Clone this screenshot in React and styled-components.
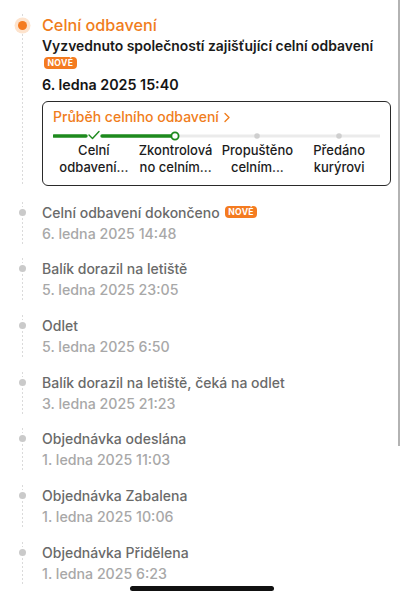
import React from "react";
import styled, { createGlobalStyle } from "styled-components";

const Global = createGlobalStyle`
  html, body { margin: 0; padding: 0; background: #ffffff; }
  body { font-family: Inter, "Noto Sans", "Liberation Sans", sans-serif; -webkit-font-smoothing: antialiased; }
  #root { width: 404px; height: 600px; overflow: hidden; }
`;

const Screen = styled.div`
  position: relative;
  width: 404px;
  height: 600px;
  overflow: hidden;
  background: #fff;
`;

const Timeline = styled.div`
  display: flex;
  flex-direction: column;
  padding-top: 14px;
`;

const Item = styled.div`
  display: grid;
  grid-template-columns: 42px 1fr;
  padding-bottom: ${(p) => p.$gap}px;
`;

const Rail = styled.div`
  box-sizing: border-box;
  width: 42px;
  display: flex;
  justify-content: center;
  padding-left: 2px;
  padding-top: ${(p) => p.$dotTop}px;
  background-image: linear-gradient(#dadada 50%, transparent 50%);
  background-size: 1px 4px;
  background-repeat: repeat-y;
  background-position: 22px 0;
`;

const Dot = styled.span`
  display: block;
  width: ${(p) => (p.$active ? 9 : 7)}px;
  height: ${(p) => (p.$active ? 9 : 7)}px;
  border-radius: 50%;
  background: ${(p) => (p.$active ? "#f47b20" : "#cacaca")};
  box-shadow: ${(p) => (p.$active ? "0 0 0 3.5px #fde3cd" : "0 0 0 2px #fff")};
`;

const Content = styled.div`
  display: flex;
  flex-direction: column;
  min-width: 0;
`;

const ActiveTitle = styled.div`
  font-size: 16.2px;
  line-height: 22px;
  font-weight: 500;
  color: #f07d1c;
`;

const Subtitle = styled.div`
  font-size: 13.9px;
  line-height: 20px;
  font-weight: 600;
  color: #1a1a1a;
`;

const Badge = styled.span`
  display: inline-flex;
  align-items: center;
  justify-content: center;
  align-self: ${(p) => (p.$inline ? "center" : "flex-start")};
  height: 12px;
  padding: 0 3.5px;
  margin-top: ${(p) => (p.$inline ? 0 : 1)}px;
  margin-left: ${(p) => (p.$inline ? 5 : 2)}px;
  border-radius: 4px;
  background: #f47b20;
  color: #fff;
  font-size: 8.6px;
  font-weight: 700;
  letter-spacing: 0.3px;
  line-height: 12px;
`;

const ActiveDate = styled.div`
  font-size: 14.3px;
  line-height: 20px;
  font-weight: 600;
  color: #141414;
  margin-top: 6px;
`;

const Card = styled.div`
  margin-top: 6px;
  margin-right: 13px;
  border: 1px solid #2a2a2a;
  border-radius: 6px;
  padding: 5px 10px 9px 10px;
`;

const CardTitle = styled.div`
  display: flex;
  align-items: center;
  gap: 4px;
  font-size: 14px;
  line-height: 20px;
  font-weight: 500;
  color: #f07d1c;
`;

const Progress = styled.svg`
  display: block;
  width: 327px;
  height: 12px;
  margin-top: 3px;
`;

const Steps = styled.div`
  display: grid;
  grid-template-columns: repeat(4, 1fr);
  width: 327px;
`;

const StepLabel = styled.div`
  text-align: center;
  font-size: 13px;
  line-height: 17px;
  font-weight: 500;
  color: #1c1c1c;
`;

const Row = styled.div`
  display: flex;
  align-items: center;
`;

const Title = styled.div`
  font-size: 14px;
  line-height: 21px;
  font-weight: 500;
  color: #6a6a6a;
`;

const DateText = styled.div`
  font-size: 14.2px;
  line-height: 21px;
  font-weight: 500;
  color: #a8a8a8;
`;

const ScrollBar = styled.div`
  position: absolute;
  top: 0;
  right: 4px;
  width: 2px;
  height: 446px;
  background: #b3b3b3;
`;

const HomeIndicator = styled.div`
  position: absolute;
  left: 130px;
  bottom: 9px;
  width: 144px;
  height: 5px;
  border-radius: 3px;
  background: #111;
`;

const events = [
  { title: "Celní odbavení dokončeno", date: "6. ledna 2025 14:48", isNew: true },
  { title: "Balík dorazil na letiště", date: "5. ledna 2025 23:05" },
  { title: "Odlet", date: "5. ledna 2025 6:50" },
  { title: "Balík dorazil na letiště, čeká na odlet", date: "3. ledna 2025 21:23" },
  { title: "Objednávka odeslána", date: "1. ledna 2025 11:03" },
  { title: "Objednávka Zabalena", date: "1. ledna 2025 10:06" },
  { title: "Objednávka Přidělena", date: "1. ledna 2025 6:23" },
];

const steps = [
  ["Celní", "odbavení..."],
  ["Zkontrolová", "no celním..."],
  ["Propuštěno", "celním..."],
  ["Předáno", "kurýrovi"],
];

export default function App() {
  return (
    <Screen>
      <Global />
      <Timeline>
        <Item $gap={15.5}>
          <Rail $dotTop={6.5}>
            <Dot $active />
          </Rail>
          <Content>
            <ActiveTitle>Celní odbavení</ActiveTitle>
            <Subtitle>Vyzvednuto společností zajišťující celní odbavení</Subtitle>
            <Badge>NOVÉ</Badge>
            <ActiveDate>6. ledna 2025 15:40</ActiveDate>
            <Card>
              <CardTitle>
                Průběh celního odbavení
                <svg width="8" height="11" viewBox="0 0 8 11">
                  <path d="M2 1.5 L6 5.5 L2 9.5" fill="none" stroke="#f07d1c" strokeWidth="1.4" strokeLinecap="round" strokeLinejoin="round" />
                </svg>
              </CardTitle>
              <Progress viewBox="0 0 327 12">
                <line x1="122" y1="6" x2="327" y2="6" stroke="#ebebeb" strokeWidth="3" strokeLinecap="round" />
                <line x1="1" y1="6" x2="33" y2="6" stroke="#1e8a1e" strokeWidth="3.4" strokeLinecap="round" />
                <line x1="49" y1="6" x2="118" y2="6" stroke="#1e8a1e" strokeWidth="3.4" strokeLinecap="round" />
                <path d="M36 5 L39.5 8.5 L46 1.5" fill="none" stroke="#1e8a1e" strokeWidth="1.4" strokeLinecap="round" strokeLinejoin="round" />
                <circle cx="122" cy="6" r="3.6" fill="#fff" stroke="#1e8a1e" strokeWidth="1.8" />
                <circle cx="204" cy="6" r="2.8" fill="#cfcfcf" />
                <circle cx="286" cy="6" r="2.8" fill="#cfcfcf" />
              </Progress>
              <Steps>
                {steps.map((s) => (
                  <StepLabel key={s[0]}>
                    {s[0]}
                    <br />
                    {s[1]}
                  </StepLabel>
                ))}
              </Steps>
            </Card>
          </Content>
        </Item>
        {events.map((e) => (
          <Item key={e.title} $gap={14.7}>
            <Rail $dotTop={7}>
              <Dot />
            </Rail>
            <Content>
              <Row>
                <Title>{e.title}</Title>
                {e.isNew && <Badge $inline>NOVÉ</Badge>}
              </Row>
              <DateText>{e.date}</DateText>
            </Content>
          </Item>
        ))}
      </Timeline>
      <ScrollBar />
      <HomeIndicator />
    </Screen>
  );
}
